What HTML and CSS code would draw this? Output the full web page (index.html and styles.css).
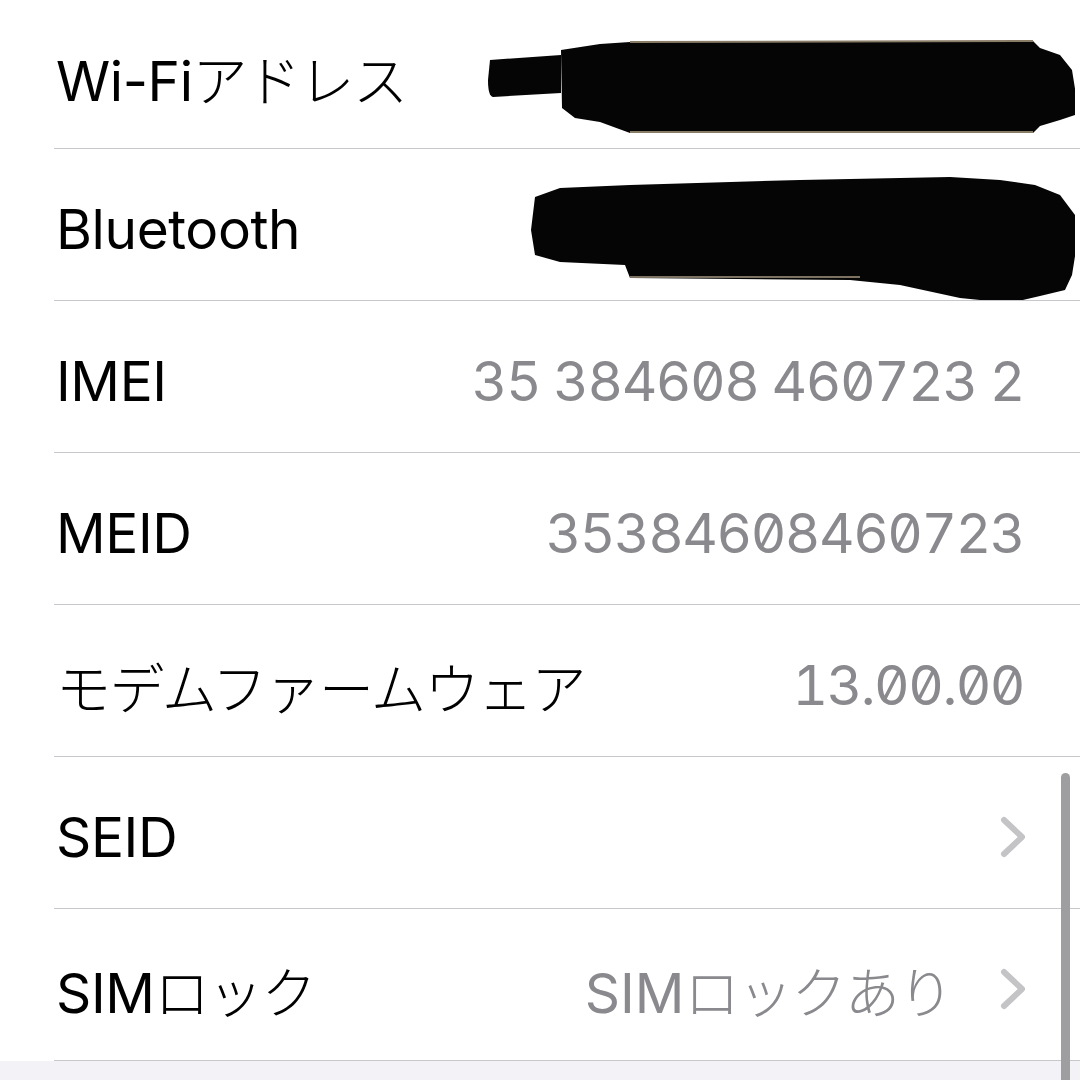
FILE: index.html
```html
<!DOCTYPE html>
<html lang="ja">
<head>
  <meta charset="UTF-8">
  <meta name="viewport" content="width=device-width, initial-scale=1.0">
  <title>情報</title>
  <link rel="stylesheet" href="styles.css">
</head>
<body>
  <div class="settings-list">
    <div class="row">
      <span class="label">Wi-Fi<span class="kana">アドレス</span></span>
      <svg class="redact redact-wifi" viewBox="485 -3 590 151" width="590" height="151">
        <path d="M490 60 L561 55 L561 93 L493 97 Q488 96 488 80 Z" fill="#050505"/>
        <path d="M561 50 L600 44 L630 42 L1033 41 L1040 48 L1060 55 L1072 70 L1076 95 L1075 115 L1060 120 L1040 126 L1033 133 L630 133 L600 122 L575 118 L562 108 Z" fill="#050505"/>
        <path d="M630 42 L1033 41" stroke="#8a7d68" stroke-width="2"/>
        <path d="M630 132 L1033 132" stroke="#8a7d68" stroke-width="2"/>
      </svg>
    </div>
    <div class="row">
      <span class="label">Bluetooth</span>
      <svg class="redact redact-bt" viewBox="525 149 550 151" width="550" height="151">
        <path d="M535 197 L560 188 L630 185 L800 180 L950 177 L1000 180 L1035 185 L1060 195 L1075 215 L1076 250 L1072 275 L1065 290 L1040 296 L1010 303 L960 298 L900 285 L850 280 L630 278 L625 265 L560 262 L535 255 L531 230 Z" fill="#050505"/>
        <path d="M630 277 L860 277" stroke="#7d7262" stroke-width="2"/>
      </svg>
    </div>
    <div class="row">
      <span class="label">IMEI</span>
      <span class="value num">35 384608 460723 2</span>
    </div>
    <div class="row">
      <span class="label">MEID</span>
      <span class="value num">35384608460723</span>
    </div>
    <div class="row">
      <span class="label kana">モデムファームウェア</span>
      <span class="value num">13.00.00</span>
    </div>
    <div class="row">
      <span class="label">SEID</span>
      <span class="value">
        <svg class="chevron" viewBox="0 0 26 42" width="26" height="42">
          <polyline points="4,4 22,21 4,38" fill="none" stroke="#c4c4c7" stroke-width="6" stroke-linecap="round" stroke-linejoin="round"/>
        </svg>
      </span>
    </div>
    <div class="row">
      <span class="label">SIM<span class="kana">ロック</span></span>
      <span class="value">
        <span>SIM<span class="kana">ロックあり</span></span>
        <svg class="chevron" viewBox="0 0 26 42" width="26" height="42">
          <polyline points="4,4 22,21 4,38" fill="none" stroke="#c4c4c7" stroke-width="6" stroke-linecap="round" stroke-linejoin="round"/>
        </svg>
      </span>
    </div>
  </div>
  <div class="group-footer"></div>
  <div class="scroll-indicator"></div>
</body>
</html>
```

FILE: styles.css
```css
html, body {
  height: 100%;
}

body {
  margin: 0;
  background-color: #ffffff;
  font-family: Inter, "Noto Sans CJK JP", sans-serif;
  color: #000000;
  display: flex;
  flex-direction: column;
  overflow: hidden;
  position: relative;
}

.settings-list {
  margin-top: -3px;
  background-color: #ffffff;
}

.row {
  display: flex;
  align-items: center;
  justify-content: space-between;
  box-sizing: border-box;
  height: 152px;
  padding: 8px 56px 0 2px;
  margin-left: 54px;
  border-bottom: 1px solid #c8c7cc;
}

.label {
  font-size: 55px;
  letter-spacing: -0.4px;
  white-space: nowrap;
}

.kana {
  font-family: "Noto Sans CJK JP", sans-serif;
  font-weight: 300;
  letter-spacing: -1.5px;
}

.value {
  display: flex;
  align-items: center;
  gap: 48px;
  font-size: 55px;
  color: #8a8a8e;
  white-space: nowrap;
}

.num {
  font-feature-settings: "tnum", "zero";
  letter-spacing: -1.5px;
}

.chevron {
  display: block;
  margin-right: -2px;
}

.redact {
  display: block;
  align-self: stretch;
  margin-top: -8px;
}

.redact-wifi,
.redact-bt {
  margin-right: -51px;
}

.group-footer {
  flex: 1;
  background-color: #f2f2f7;
}

/* iOS style scroll bar on top of the list */
.scroll-indicator {
  position: absolute;
  top: 773px;
  right: 10px;
  bottom: 0;
  width: 9px;
  border-radius: 5px 5px 0 0;
  background-color: #9e9ea0;
}
```
